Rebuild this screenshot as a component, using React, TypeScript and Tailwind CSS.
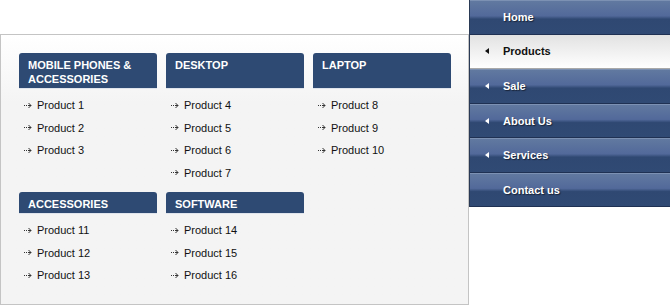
import React from 'react';

interface Column {
  title: string[];
  items: string[];
}

const topRow: Column[] = [
  { title: ['MOBILE PHONES &', 'ACCESSORIES'], items: ['Product 1', 'Product 2', 'Product 3'] },
  { title: ['DESKTOP'], items: ['Product 4', 'Product 5', 'Product 6', 'Product 7'] },
  { title: ['LAPTOP'], items: ['Product 8', 'Product 9', 'Product 10'] },
];

const bottomRow: Column[] = [
  { title: ['ACCESSORIES'], items: ['Product 11', 'Product 12', 'Product 13'] },
  { title: ['SOFTWARE'], items: ['Product 14', 'Product 15', 'Product 16'] },
];

const menu = [
  { label: 'Home', arrow: false },
  { label: 'Products', arrow: true, active: true },
  { label: 'Sale', arrow: true },
  { label: 'About Us', arrow: true },
  { label: 'Services', arrow: true },
  { label: 'Contact us', arrow: false },
];

const ItemArrow = () => (
  <svg width="8" height="7" viewBox="0 0 8 7" className="shrink-0">
    <path d="M0 3.5h1M2 3.5h1M4 3.5h3" stroke="#333" strokeWidth="1" />
    <path d="M4.5 1L7 3.5L4.5 6" stroke="#333" strokeWidth="1" fill="none" />
  </svg>
);

const MenuGroup = ({ col, tall }: { col: Column; tall: boolean }) => (
  <div className="flex flex-col">
    <div
      className={`${tall ? 'h-[36px]' : 'h-[22px]'} rounded-t-[3px] bg-[#2e4a73] border-b border-[#dfe4ec] px-[9px] pt-[5px] text-[11px] leading-[14px] font-bold text-white`}
    >
      {col.title.map((t) => (
        <div key={t}>{t}</div>
      ))}
    </div>
    <ul className="pt-[5px]">
      {col.items.map((item) => (
        <li key={item} className="flex items-center h-[22.5px] pl-[5px] gap-[5px] text-[11px] text-[#111]">
          <ItemArrow />
          <span>{item}</span>
        </li>
      ))}
    </ul>
  </div>
);

export default function App() {
  return (
    <div className="w-[670px] h-[305px] bg-white flex font-['Liberation_Sans',Arial,sans-serif]">
      <div className="mt-[34px] w-[469px] h-[271px] border border-[#c4c4c4] bg-gradient-to-b from-white to-[#f4f4f4] to-[25%] pt-[18px] pl-[18px]">
        <div className="grid grid-cols-[138px_138px_138px] gap-x-[9px]">
          {topRow.map((c) => (
            <MenuGroup key={c.title.join()} col={c} tall />
          ))}
        </div>
        <div className="grid grid-cols-[138px_138px_138px] gap-x-[9px] mt-[8px]">
          {bottomRow.map((c) => (
            <MenuGroup key={c.title.join()} col={c} tall={false} />
          ))}
        </div>
      </div>
      <nav className="w-[201px] h-[207px] border-l border-[#2a3a55] flex flex-col">
        {menu.map((m) => (
          <div
            key={m.label}
            className={`h-[34.5px] flex items-center border-b ${
              m.active
                ? 'bg-gradient-to-b from-[#e2e2e2] to-white border-[#a9a9a9] text-[#111]'
                : 'bg-[linear-gradient(to_bottom,#6179a0_0%,#52699a_45%,#2f4872_55%,#304a74_100%)] border-[#1f3153] border-t border-t-[#7c91b3] text-white [text-shadow:1px_1px_1px_#1a2438]'
            }`}
          >
            <span className="w-[33px] flex justify-end pr-[14px]">
              {m.arrow && (
                <svg width="4" height="6" viewBox="0 0 4 6">
                  <path d="M4 0L0 3L4 6Z" fill={m.active ? '#111' : '#fff'} />
                </svg>
              )}
            </span>
            <span className="text-[11px] font-bold">{m.label}</span>
          </div>
        ))}
      </nav>
    </div>
  );
}
